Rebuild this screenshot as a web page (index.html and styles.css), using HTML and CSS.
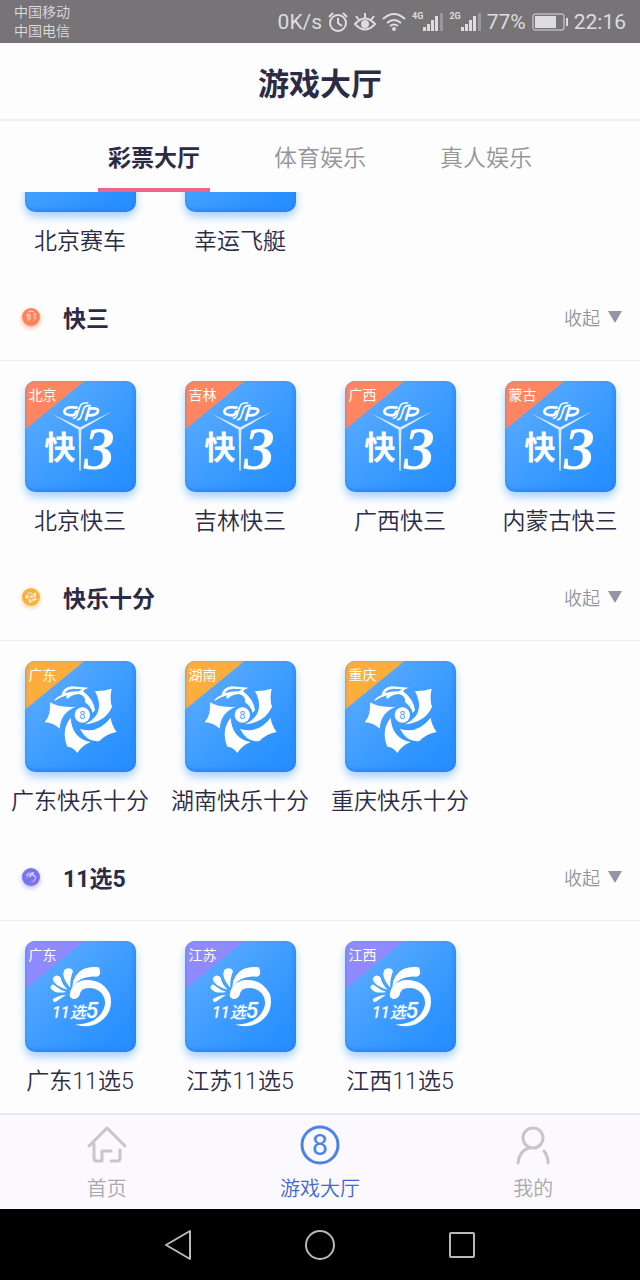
FILE: index.html
```html
<!DOCTYPE html>
<html lang="zh-CN">
<head>
    <meta charset="UTF-8">
    <meta name="viewport" content="width=device-width, initial-scale=1.0">
    <title>游戏大厅</title>
    <link rel="stylesheet" href="styles.css">
</head>
<body>
    <!-- shared drawings -->
    <svg class="defs" aria-hidden="true">
        <symbol id="k3" viewBox="45 47 333 333">
            <g fill="none" stroke="#fff" stroke-width="8" stroke-linecap="round">
                <path d="M200 127Q166 122 163 138Q163 150 188 150Q196 149 199 138"/>
                <path d="M233 113H224Q213 114 209 125L200 152Q197 159 190 159" stroke-width="5"/>
                <path d="M241 121H232Q224 122 221 131L213 154Q210 163 203 163" stroke-width="5"/>
                <path d="M228 163L238 129H252Q267 130 264 139Q258 151 236 150"/>
            </g>
            <path fill="#d9edff" d="M125 145L210 186L308 137L214 193L212 316H208L206 193Z"/>
        </symbol>
        <symbol id="happy10" viewBox="45 47 333 333">
            <g fill="#fff">
                <path d="M120 171Q146 188 198 184Q152 200 149 250Q130 232 104 231Q123 210 120 171Z"/>
                <path d="M182 217Q186 280 242 290Q215 300 202 323Q190 305 172 304Q152 255 182 217Z"/>
                <path d="M210 250Q262 268 302 217Q305 240 320 260Q290 265 268 287Q230 292 210 250Z"/>
                <path d="M255 137Q280 138 305 130Q298 160 306 185Q284 232 225 237Q290 205 255 137Z"/>
                <path d="M132 168Q139 154 155 150Q158 126 185 123L236 127Q223 131 219 138Q250 160 255 195L248 203Q242 182 225 171Q228 150 205 146Q185 148 173 161Q166 156 170 150Q150 156 132 168Z"/>
                <circle cx="217" cy="209" r="23"/>
            </g>
            <path d="M165 144Q170 131 190 130L216 132L207 138Q185 137 165 144Z" fill="#50a4ff"/>
        </symbol>
        <symbol id="pick5" viewBox="45 47 333 333">
            <g fill="#fff">
                <path d="M187 184Q189 148 220 131Q242 122 267 126Q277 151 260 154Q215 148 187 184Z"/>
                <path d="M181 188Q150 151 165 132Q184 124 189 137Q179 163 181 188Z"/>
                <path d="M173 193Q132 182 128 161Q136 143 151 155Q156 177 173 193Z"/>
                <path d="M169 200Q133 207 121 187Q125 171 137 183Q151 194 169 200Z"/>
                <path d="M168 208Q145 210 129 221Q127 234 140 228Q153 218 168 208Z"/>
                <path d="M179 210Q181 176 218 165Q276 158 300 207Q313 259 269 290Q234 312 193 297Q238 300 267 273Q299 235 275 204Q251 180 218 192Q211 198 207 213Q199 224 187 220Q179 217 179 210Z"/>
            </g>
        </symbol>
        <symbol id="signal" viewBox="0 0 20 20">
            <path d="M0 15h3v4H0zM4 12h3v7H4zM8 8h3v11H8zM12 4h3v15h-3z" fill="#dddcde"/>
            <path d="M17 1h3v18h-3z" fill="#9b989c"/>
        </symbol>
    </svg>

    <div class="status">
        <div class="carriers">
            <div>中国移动</div>
            <div>中国电信</div>
        </div>
        <div class="indicators">
            <span>0K/s</span>
            <svg width="20" height="20" viewBox="0 0 20 20" fill="none" stroke="#dddcde" stroke-width="2">
                <circle cx="10" cy="11" r="8"/>
                <path d="M10 6v5l4 3M1 5l4-4M19 5l-4-4"/>
            </svg>
            <svg width="22" height="20" viewBox="0 0 22 20" fill="none" stroke="#dddcde" stroke-width="2">
                <path d="M1 12Q11 1 21 12Q11 23 1 12ZM11 6V1M5 8L2 4M17 8l3-4"/>
                <circle cx="11" cy="12" r="3" fill="#dddcde"/>
            </svg>
            <svg width="24" height="20" viewBox="0 0 24 20" fill="none" stroke="#dddcde" stroke-width="2">
                <path d="M1 7Q12-3 23 7M5 11q7-6 14 0M8 14q4-3 8 0"/>
                <circle cx="12" cy="17" r="1" fill="#dddcde"/>
            </svg>
            <span class="network"><b>4G</b><svg width="20" height="20"><use href="#signal"/></svg></span>
            <span class="network"><b>2G</b><svg width="20" height="20"><use href="#signal"/></svg></span>
            <span>77%</span>
            <svg width="36" height="18" viewBox="0 0 36 18">
                <rect x="1" y="1" width="31" height="16" rx="2" fill="none" stroke="#dddcde"/>
                <path d="M3 3h21v12H3zM34 5h2v8h-2z" fill="#dddcde"/>
            </svg>
            <span>22:16</span>
        </div>
    </div>

    <header class="header">
        <h1>游戏大厅</h1>
    </header>

    <nav class="tabs">
        <button type="button" class="tab active">彩票大厅</button>
        <button type="button" class="tab">体育娱乐</button>
        <button type="button" class="tab">真人娱乐</button>
    </nav>

    <main class="hall" id="hall">
        <section>
            <div class="games">
                <a class="game" href="#"><span class="tile"></span>北京赛车</a>
                <a class="game" href="#"><span class="tile"></span>幸运飞艇</a>
            </div>
        </section>

        <section class="orange">
            <div class="section-head">
                <svg class="badge" viewBox="0 0 18 18" fill="none" stroke="#fff">
                    <path d="M4 7l3 1M6 5v8M8 6v6M11 6l3 0l-2 3l2 1l-3 3M6 4q3-2 6 0" opacity=".7"/>
                </svg>
                <h2>快三</h2>
                <button type="button" class="toggle">收起<span class="arrow"></span></button>
            </div>
            <div class="games">
                <a class="game" href="#">
                    <span class="tile">
                        <span class="ribbon">北京</span>
                        <svg viewBox="45 47 333 333"><use href="#k3" x="45" y="47" width="333" height="333"/><text class="logo-char" x="103" y="282">快</text><text class="logo-num" x="222" y="312">3</text></svg>
                    </span>
                    北京快三
                </a>
                <a class="game" href="#">
                    <span class="tile">
                        <span class="ribbon">吉林</span>
                        <svg viewBox="45 47 333 333"><use href="#k3" x="45" y="47" width="333" height="333"/><text class="logo-char" x="103" y="282">快</text><text class="logo-num" x="222" y="312">3</text></svg>
                    </span>
                    吉林快三
                </a>
                <a class="game" href="#">
                    <span class="tile">
                        <span class="ribbon">广西</span>
                        <svg viewBox="45 47 333 333"><use href="#k3" x="45" y="47" width="333" height="333"/><text class="logo-char" x="103" y="282">快</text><text class="logo-num" x="222" y="312">3</text></svg>
                    </span>
                    广西快三
                </a>
                <a class="game" href="#">
                    <span class="tile">
                        <span class="ribbon">蒙古</span>
                        <svg viewBox="45 47 333 333"><use href="#k3" x="45" y="47" width="333" height="333"/><text class="logo-char" x="103" y="282">快</text><text class="logo-num" x="222" y="312">3</text></svg>
                    </span>
                    内蒙古快三
                </a>
            </div>
        </section>

        <section class="yellow">
            <div class="section-head">
                <svg class="badge" viewBox="45 47 333 333"><use href="#happy10" x="45" y="47" width="333" height="333" opacity=".8"/></svg>
                <h2>快乐十分</h2>
                <button type="button" class="toggle">收起<span class="arrow"></span></button>
            </div>
            <div class="games">
                <a class="game" href="#">
                    <span class="tile">
                        <span class="ribbon">广东</span>
                        <svg viewBox="45 47 333 333"><use href="#happy10" x="45" y="47" width="333" height="333"/><text class="logo-digit" x="217" y="220">8</text></svg>
                    </span>
                    广东快乐十分
                </a>
                <a class="game" href="#">
                    <span class="tile">
                        <span class="ribbon">湖南</span>
                        <svg viewBox="45 47 333 333"><use href="#happy10" x="45" y="47" width="333" height="333"/><text class="logo-digit" x="217" y="220">8</text></svg>
                    </span>
                    湖南快乐十分
                </a>
                <a class="game" href="#">
                    <span class="tile">
                        <span class="ribbon">重庆</span>
                        <svg viewBox="45 47 333 333"><use href="#happy10" x="45" y="47" width="333" height="333"/><text class="logo-digit" x="217" y="220">8</text></svg>
                    </span>
                    重庆快乐十分
                </a>
            </div>
        </section>

        <section class="purple">
            <div class="section-head">
                <svg class="badge" viewBox="45 47 333 333"><use href="#pick5" x="45" y="47" width="333" height="333" opacity=".8"/></svg>
                <h2>11选5</h2>
                <button type="button" class="toggle">收起<span class="arrow"></span></button>
            </div>
            <div class="games">
                <a class="game" href="#">
                    <span class="tile">
                        <span class="ribbon">广东</span>
                        <svg viewBox="45 47 333 333"><use href="#pick5" x="45" y="47" width="333" height="333"/><text class="logo-pick" x="126" y="279">11选<tspan class="big">5</tspan></text></svg>
                    </span>
                    广东11选5
                </a>
                <a class="game" href="#">
                    <span class="tile">
                        <span class="ribbon">江苏</span>
                        <svg viewBox="45 47 333 333"><use href="#pick5" x="45" y="47" width="333" height="333"/><text class="logo-pick" x="126" y="279">11选<tspan class="big">5</tspan></text></svg>
                    </span>
                    江苏11选5
                </a>
                <a class="game" href="#">
                    <span class="tile">
                        <span class="ribbon">江西</span>
                        <svg viewBox="45 47 333 333"><use href="#pick5" x="45" y="47" width="333" height="333"/><text class="logo-pick" x="126" y="279">11选<tspan class="big">5</tspan></text></svg>
                    </span>
                    江西11选5
                </a>
            </div>
        </section>
    </main>

    <nav class="bottom-nav">
        <a href="#">
            <svg width="40" height="40" viewBox="0 0 40 40" fill="none" stroke="#c6c5c8" stroke-width="3" stroke-linecap="round" stroke-linejoin="round">
                <path d="M2 21L20 3L38 21M7 19V33Q7 36 10 36H15V26H24M33 25V33Q33 36 30 36H24"/>
            </svg>
            首页
        </a>
        <a href="#" class="active">
            <svg width="40" height="40" viewBox="0 0 40 40">
                <circle cx="20" cy="20" r="18" fill="none" stroke="#4a82e6" stroke-width="3"/>
                <text class="nav-digit" x="20" y="30">8</text>
            </svg>
            游戏大厅
        </a>
        <a href="#">
            <svg width="40" height="40" viewBox="0 0 40 40" fill="none" stroke="#c6c5c8" stroke-width="3" stroke-linecap="round">
                <circle cx="20" cy="13" r="10"/>
                <path d="M5 38Q6 26 16 23M31 26Q35 31 35 38"/>
            </svg>
            我的
        </a>
    </nav>

    <div class="system-nav">
        <button type="button" aria-label="返回">
            <svg width="30" height="30" viewBox="0 0 30 30"><path d="M27 1V29L3 15Z"/></svg>
        </button>
        <button type="button" aria-label="主页">
            <svg width="30" height="30" viewBox="0 0 30 30"><circle cx="15" cy="15" r="14"/></svg>
        </button>
        <button type="button" aria-label="最近任务">
            <svg width="30" height="30" viewBox="0 0 30 30"><rect x="3" y="3" width="24" height="24" rx="1"/></svg>
        </button>
    </div>

    <script>
        // open the hall at the end of the list
        const hall = document.getElementById('hall');
        hall.scrollTop = hall.scrollHeight;
    </script>
</body>
</html>
```
FILE: styles.css
```css
* {
    box-sizing: border-box;
}
body {
    margin: 0;
    height: 100vh;
    display: flex;
    flex-direction: column;
    background-color: #fdfdfe;
    color: #2b2b45;
    font-family: Roboto, "Noto Sans CJK SC", sans-serif;
    font-weight: 350;
}
button {
    padding: 0;
    border: none;
    background: none;
    color: inherit;
    font: inherit;
    cursor: pointer;
}
a {
    color: inherit;
    text-decoration: none;
}
h1, h2 {
    margin: 0;
    font-weight: bold;
}
svg {
    display: block;
}
.defs {
    position: absolute;
    width: 0;
    height: 0;
}

/* status bar */
.status {
    flex: none;
    height: 43px;
    padding: 0 14px;
    display: flex;
    justify-content: space-between;
    align-items: center;
    background-color: #777478;
    color: #dddcde;
}
.carriers {
    font-size: 14px;
    line-height: 19px;
}
.indicators {
    display: flex;
    align-items: center;
    gap: 6px;
    font-size: 21px;
    font-weight: 400;
}
.network {
    display: flex;
    align-items: flex-start;
}
.network b {
    font-size: 9px;
    line-height: 9px;
}

/* header and tabs */
.header {
    flex: none;
    height: 78px;
    display: flex;
    justify-content: center;
    align-items: center;
    border-bottom: 2px solid #efeff1;
}
.header h1 {
    font-size: 31px;
}
.tabs {
    flex: none;
    height: 71px;
    display: flex;
    justify-content: center;
    gap: 54px;
    background-color: #fdfdfe;
}
.tab {
    width: 112px;
    padding-top: 2px;
    border-bottom: 4px solid transparent;
    font-size: 23px;
    color: #95949b;
}
.tab.active {
    border-color: #f0648c;
    color: #2b2b45;
    font-weight: bold;
}

/* game list */
.hall {
    flex: 1;
    min-height: 0;
    overflow-y: auto;
    scrollbar-width: none;
}
.section-head {
    height: 88px;
    padding: 0 18px 0 22px;
    display: flex;
    align-items: center;
    border-bottom: 1px solid #ededf0;
}
.section-head h2 {
    margin-left: 23px;
    flex: 1;
    font-size: 23px;
}
.badge {
    width: 18px;
    height: 18px;
    border-radius: 50%;
}
.orange .badge {
    background-color: #ff8259;
    box-shadow: 0 2px 5px #ffb399;
}
.yellow .badge {
    background-color: #fbb040;
    box-shadow: 0 2px 5px #fdd694;
}
.purple .badge {
    background-color: #7a72ee;
    box-shadow: 0 2px 5px #b9b4fa;
}
.toggle {
    display: flex;
    align-items: center;
    gap: 8px;
    font-size: 18px;
    color: #95959f;
}
.arrow {
    border: 7px solid transparent;
    border-top: 12px solid #9394a4;
    border-bottom: none;
}
.games {
    padding: 20px 0 17px;
    display: grid;
    grid-template-columns: repeat(4, 1fr);
}
.game {
    display: flex;
    flex-direction: column;
    align-items: center;
    gap: 16px;
    font-size: 23px;
    line-height: 28px;
    white-space: nowrap;
}
.tile {
    position: relative;
    width: 111px;
    height: 111px;
    border-radius: 10px;
    overflow: hidden;
    background: linear-gradient(135deg, #62b0ff, #2890ff 85%);
    box-shadow: 0 5px 8px #a3d2ff;
}
.tile::after {
    content: "";
    position: absolute;
    inset: 0;
    border-radius: 10px;
    box-shadow: inset -1px -2px 4px #2a7ff8;
}
.tile svg {
    width: 100%;
    height: 100%;
}
.ribbon {
    position: absolute;
    top: 0;
    left: 0;
    width: 60px;
    height: 49px;
    padding: 4px;
    clip-path: polygon(0 0, 100% 0, 0 100%);
    color: #fff;
    font-size: 14px;
    font-weight: 400;
    line-height: 20px;
}
.orange .ribbon {
    background-color: #ff8660;
}
.yellow .ribbon {
    background-color: #fcad3b;
}
.purple .ribbon {
    background-color: #8f8bff;
}

/* lettering inside the drawings */
.logo-char {
    fill: #fff;
    font-family: "Noto Sans CJK SC", sans-serif;
    font-size: 94px;
    font-weight: 700;
}
.logo-num {
    fill: #fff;
    font-family: "Liberation Serif", serif;
    font-size: 184px;
    font-style: italic;
    font-weight: 700;
}
.logo-digit {
    fill: #4b9dfb;
    font-size: 31px;
    font-weight: 400;
    text-anchor: middle;
}
.logo-pick {
    fill: #fff;
    stroke: #48a0ff;
    stroke-width: 6px;
    paint-order: stroke;
    font-size: 48px;
    font-style: italic;
    font-weight: 500;
}
.logo-pick .big {
    font-size: 68px;
}
.nav-digit {
    fill: #4a82e6;
    font-size: 29px;
    font-weight: 400;
    text-anchor: middle;
}

/* bottom bars */
.bottom-nav {
    flex: none;
    height: 96px;
    display: grid;
    grid-template-columns: repeat(3, 1fr);
    border-top: 2px solid #e9e8ee;
    background-color: #fbf9fd;
    color: #a9a8ac;
    font-size: 20px;
    line-height: 28px;
}
.bottom-nav a {
    padding-top: 10px;
    display: flex;
    flex-direction: column;
    align-items: center;
    gap: 10px;
}
.bottom-nav .active {
    color: #3d68d0;
}
.system-nav {
    flex: none;
    height: 71px;
    display: flex;
    justify-content: center;
    align-items: center;
    gap: 112px;
    background-color: #000;
}
.system-nav svg {
    fill: none;
    stroke: #b9b9b9;
    stroke-width: 2;
    stroke-linejoin: round;
}
```
